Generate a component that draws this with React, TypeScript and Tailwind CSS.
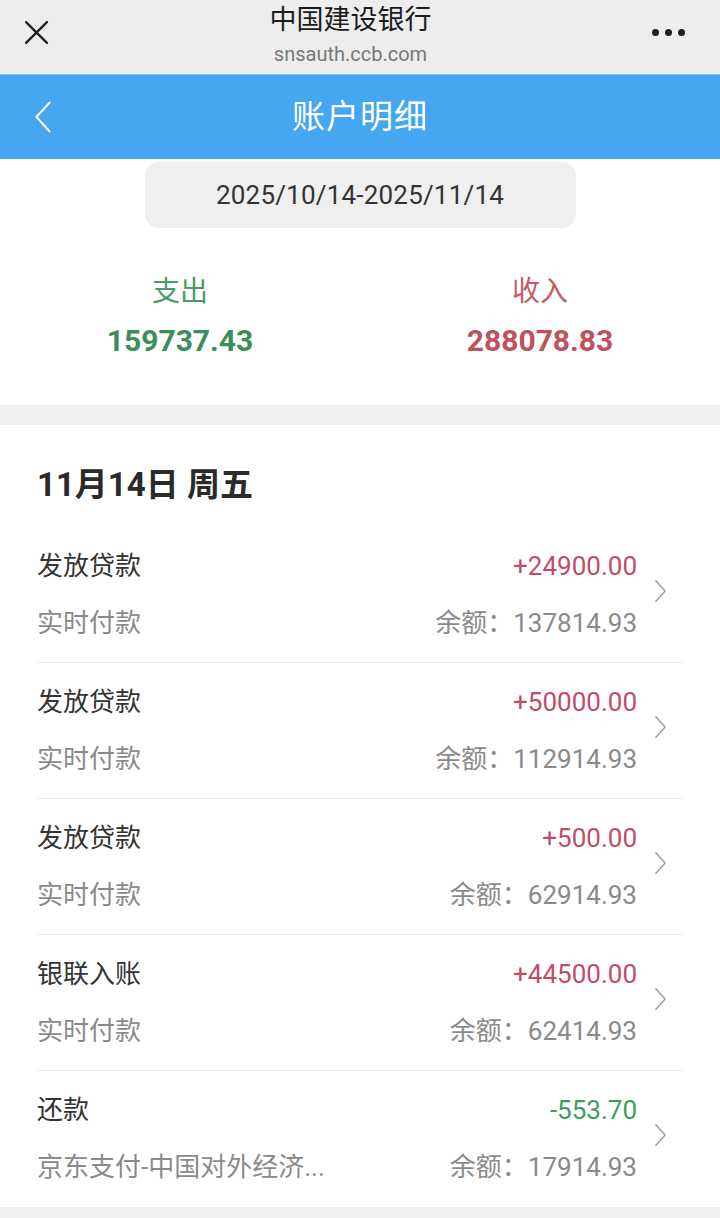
import React from 'react';

const FONT = { fontFamily: 'Roboto, "Noto Sans CJK SC", sans-serif' };

const rows = [
  { title: '发放贷款', sub: '实时付款', amount: '+24900.00', balance: '137814.93', income: true },
  { title: '发放贷款', sub: '实时付款', amount: '+50000.00', balance: '112914.93', income: true },
  { title: '发放贷款', sub: '实时付款', amount: '+500.00', balance: '62914.93', income: true },
  { title: '银联入账', sub: '实时付款', amount: '+44500.00', balance: '62414.93', income: true },
  { title: '还款', sub: '京东支付-中国对外经济...', amount: '-553.70', balance: '17914.93', income: false },
];

const Chevron = ({ className }: { className?: string }) => (
  <svg className={className} viewBox="0 0 14 26" fill="none" stroke="currentColor" strokeWidth="1.6" strokeLinecap="round" strokeLinejoin="round">
    <path d="M2 2l10 11L2 24" />
  </svg>
);

export default function App() {
  return (
    <div className="w-[720px] min-h-[1218px] bg-[#efefef]" style={FONT}>
      {/* browser bar */}
      <div className="h-[74px] bg-[#ededed] flex items-center justify-between px-[24px]">
        <svg className="w-[25px] h-[25px] -mt-[10px] text-[#1f1f1f]" viewBox="0 0 24 24" fill="none" stroke="currentColor" strokeWidth="2.2" strokeLinecap="round">
          <path d="M2 2l20 20M22 2L2 22" />
        </svg>
        <div className="flex flex-col items-center -mt-[3px]">
          <div className="text-[27px] leading-[32px] text-[#1c1c1c]">中国建设银行</div>
          <div className="text-[20px] leading-[26px] text-[#777] mt-[5px]">snsauth.ccb.com</div>
        </div>
        <div className="flex gap-[6px] pr-[11px] -mt-[10px]">
          <span className="w-[7px] h-[7px] rounded-full bg-[#1f1f1f]" />
          <span className="w-[7px] h-[7px] rounded-full bg-[#1f1f1f]" />
          <span className="w-[7px] h-[7px] rounded-full bg-[#1f1f1f]" />
        </div>
      </div>

      {/* blue header */}
      <div className="relative h-[85px] bg-[#45a6f1] border-t border-[#7cc4f5] flex items-center justify-center">
        <Chevron className="absolute left-[33px] top-[25px] w-[20px] h-[34px] text-white rotate-180" />
        <div className="text-[33px] text-white tracking-[1px]">账户明细</div>
      </div>

      {/* summary */}
      <div className="bg-white pt-[3px] pb-[44px]">
        <div className="mx-auto w-[431px] h-[66px] rounded-[14px] bg-[#efefef] flex items-center justify-center text-[26px] text-[#333] tracking-[0.2px]">
          2025/10/14-2025/11/14
        </div>
        <div className="grid grid-cols-2 mt-[44px]">
          <div className="flex flex-col items-center gap-[9px]">
            <div className="text-[28px] leading-[40px] text-[#4a9a68]">支出</div>
            <div className="text-[30px] leading-[40px] font-bold text-[#3b8d5c]">159737.43</div>
          </div>
          <div className="flex flex-col items-center gap-[9px]">
            <div className="text-[28px] leading-[40px] text-[#c45a5f]">收入</div>
            <div className="text-[30px] leading-[40px] font-bold text-[#c0505a]">288078.83</div>
          </div>
        </div>
      </div>

      {/* list */}
      <div className="mt-[20px] bg-white px-[37px] pt-[40px]">
        <div className="text-[33px] leading-[40px] font-bold text-[#2a2a2a] mb-[22px]">11月14日 周五</div>
        {rows.map((r, i) => (
          <div
            key={i}
            className={`flex items-center pt-[21px] ${i < rows.length - 1 ? 'pb-[21px] border-b border-[#ececec]' : 'pb-[22px]'}`}
          >
            <div className="flex-1 flex flex-col gap-[21px] text-[26px] leading-[36px]">
              <div className="flex justify-between">
                <span className="text-[#333]">{r.title}</span>
                <span className={r.income ? 'text-[#c24c66]' : 'text-[#3f9a5e]'}>{r.amount}</span>
              </div>
              <div className="flex justify-between text-[#8a8a8a]">
                <span>{r.sub}</span>
                <span>余额：{r.balance}</span>
              </div>
            </div>
            <div className="w-[46px] flex justify-end pr-[16px] -mt-[8px]">
              <Chevron className="w-[13px] h-[24px] text-[#a0a0a0]" />
            </div>
          </div>
        ))}
      </div>
    </div>
  );
}
